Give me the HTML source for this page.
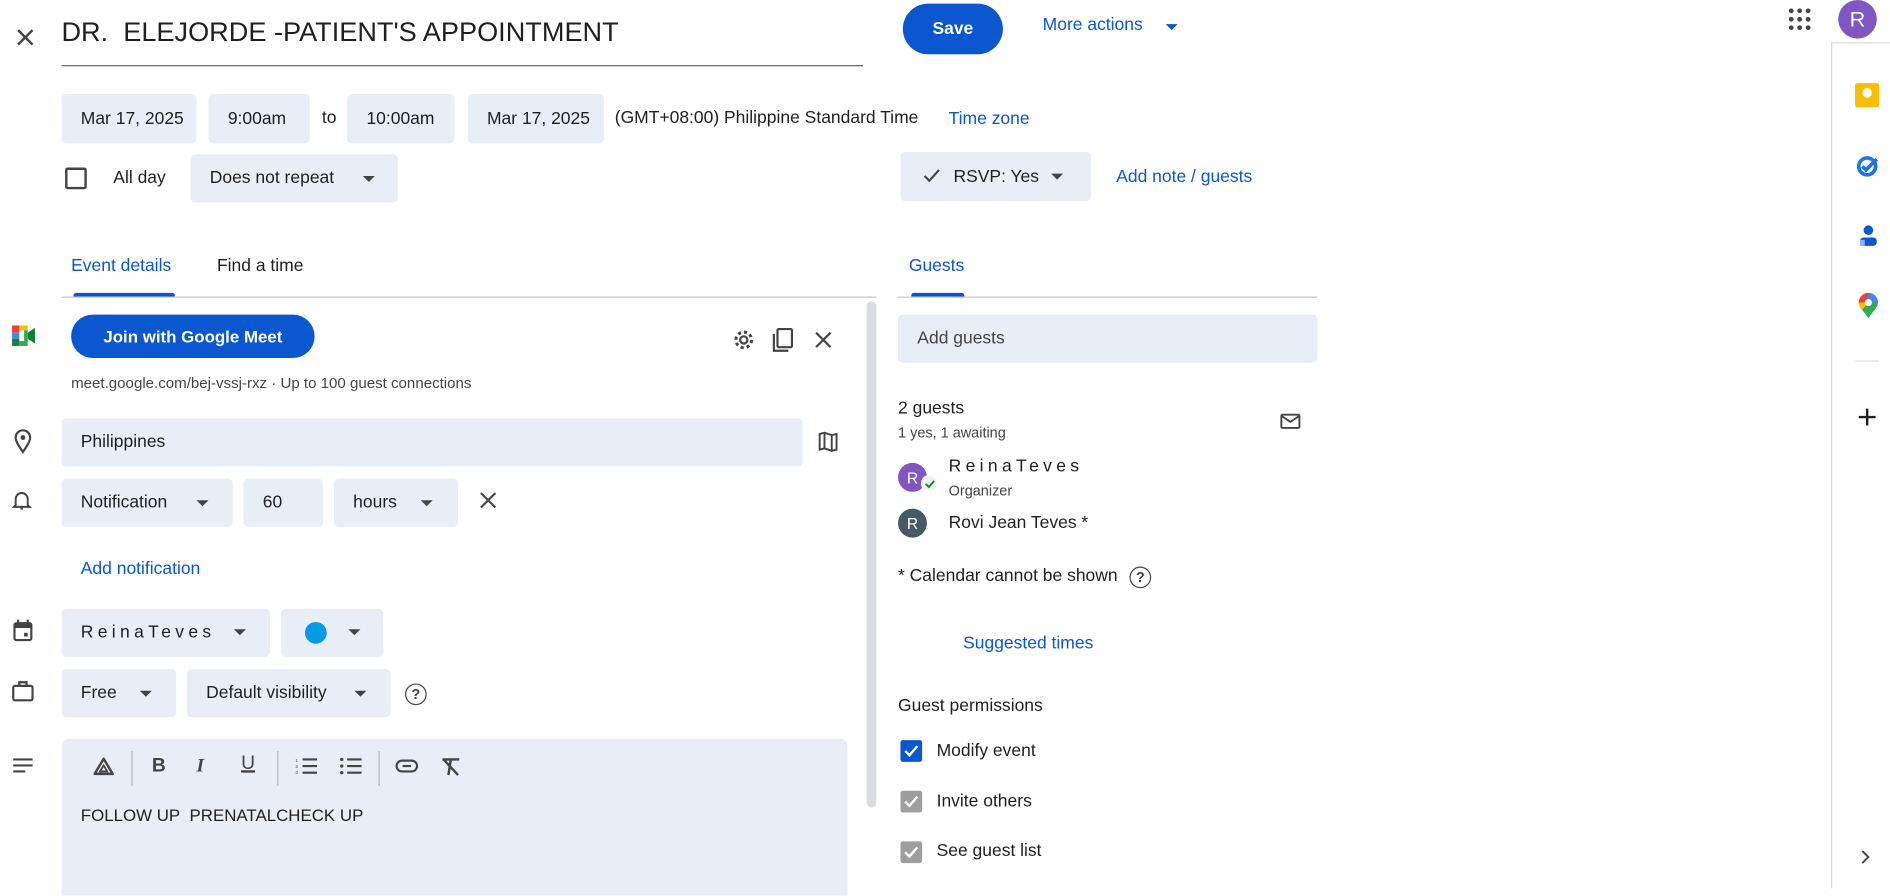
<!DOCTYPE html>
<html><head><meta charset="utf-8">
<style>
*{box-sizing:border-box;margin:0;padding:0}
html,body{width:1890px;height:888px;overflow:hidden;background:#fff}
#w{position:absolute;left:0;top:0;width:1568px;height:737px;transform:scale(1.2054);transform-origin:0 0;font-family:"Liberation Sans",Arial,sans-serif;color:#1f1f1f;font-size:14.5px}
.a{position:absolute}
.chip{position:absolute;background:#e9eef6;border-radius:4px;display:flex;align-items:center;padding-left:16px;font-size:14.5px;color:#1f1f1f}
.dd{position:absolute;width:0;height:0;border-left:5px solid transparent;border-right:5px solid transparent;border-top:5px solid #444}
.blue{color:#0b57d0;font-weight:bold}
.t{position:absolute;white-space:nowrap}
svg{position:absolute;overflow:visible}
</style></head><body><div id="w">

<svg style="left:14px;top:24px" width="14" height="14"><path d="M1 1L13 13M13 1L1 13" stroke="#444" stroke-width="2"/></svg>
<div class="t" style="left:51px;top:14px;font-size:22.5px;color:#1f1f1f">DR.&nbsp; ELEJORDE -PATIENT'S APPOINTMENT</div>
<div class="a" style="left:51px;top:54px;width:665px;height:1px;background:#5f6368"></div>
<div class="a" style="left:749px;top:3px;width:83px;height:42px;border-radius:21px;background:#0b57d0;color:#fff;font-weight:bold;display:flex;align-items:center;justify-content:center">Save</div>
<div class="t blue" style="left:865px;top:13px;font-weight:normal">More actions</div>
<div class="dd" style="left:967px;top:20px;border-top-color:#0b57d0"></div>

<svg style="left:1484px;top:7px" width="18" height="18"><g fill="#444"><circle cx="2" cy="2" r="2"/><circle cx="9" cy="2" r="2"/><circle cx="16" cy="2" r="2"/><circle cx="2" cy="9" r="2"/><circle cx="9" cy="9" r="2"/><circle cx="16" cy="9" r="2"/><circle cx="2" cy="16" r="2"/><circle cx="9" cy="16" r="2"/><circle cx="16" cy="16" r="2"/></g></svg>
<div class="a" style="left:1525px;top:0px;width:32px;height:32px;border-radius:50%;background:#7e57c2;color:#fff;font-size:18px;display:flex;align-items:center;justify-content:center">R</div>

<div class="a" style="left:1519px;top:35px;width:1px;height:702px;background:#dadce0"></div>
<div class="a" style="left:1519px;top:35px;width:49px;height:1px;background:#dadce0"></div>
<div class="a" style="left:1539px;top:69px;width:20px;height:20px;background:#fbbc04;border-radius:2px"></div>
<div class="a" style="left:1545px;top:73px;width:8px;height:8px;background:#fff;border-radius:50%"></div>
<svg style="left:1540px;top:128px" width="20" height="20"><circle cx="9" cy="10" r="7" fill="none" stroke="#1a73e8" stroke-width="3"/><path d="M5 10l3 3 9-9" stroke="#1a73e8" stroke-width="3" fill="none"/></svg>
<svg style="left:1540px;top:186px" width="20" height="20"><circle cx="10" cy="5" r="4" fill="#0b57d0"/><rect x="3" y="11" width="14" height="7" rx="3" fill="#0b57d0"/><rect x="3" y="13" width="4" height="5" fill="#8ab4f8"/></svg>
<svg style="left:1541px;top:243px" width="18" height="22"><path d="M9 21C5 15 1 12 1 8a8 8 0 0 1 16 0c0 4-4 7-8 13z" fill="#34a853"/><path d="M1 8a8 8 0 0 1 8-8v8z" fill="#ea4335"/><path d="M9 0a8 8 0 0 1 8 8H9z" fill="#4285f4"/><path d="M1 8h8l-5 6C2 12 1 10 1 8z" fill="#fbbc04"/><circle cx="9" cy="8" r="3" fill="#fff"/></svg>
<div class="a" style="left:1539px;top:299px;width:20px;height:1px;background:#e0e0e0"></div>
<svg style="left:1542px;top:339px" width="14" height="14"><path d="M7 0V14M0 7H14" stroke="#222" stroke-width="2"/></svg>
<svg style="left:1544px;top:705px" width="8" height="12"><path d="M1 1l5 5-5 5" stroke="#444" stroke-width="1.6" fill="none"/></svg>

<div class="chip" style="left:51px;top:78px;width:112px;height:41px">Mar 17, 2025</div>
<div class="chip" style="left:173px;top:78px;width:84px;height:41px">9:00am</div>
<div class="t" style="left:267px;top:90px">to</div>
<div class="chip" style="left:288px;top:78px;width:89px;height:41px">10:00am</div>
<div class="chip" style="left:388px;top:78px;width:113px;height:41px">Mar 17, 2025</div>
<div class="t" style="left:510px;top:90px">(GMT+08:00) Philippine Standard Time</div>
<div class="t blue" style="left:787px;top:91px;font-weight:normal">Time zone</div>

<div class="a" style="left:54px;top:139px;width:18px;height:18px;border:2px solid #444;border-radius:2px"></div>
<div class="t" style="left:94px;top:140px">All day</div>
<div class="chip" style="left:158px;top:128px;width:172px;height:40px">Does not repeat</div>
<div class="dd" style="left:301px;top:146px"></div>
<div class="chip" style="left:747px;top:126px;width:158px;height:41px;padding-left:20px"><svg style="left:19px;top:14px" width="14" height="12"><path d="M1 6l4 4 8-9" stroke="#444" stroke-width="1.8" fill="none"/></svg><span style="margin-left:24px">RSVP: Yes</span></div>
<div class="dd" style="left:872px;top:144px"></div>
<div class="t blue" style="left:926px;top:139px;font-weight:normal">Add note / guests</div>

<div class="t" style="left:59px;top:213px;color:#0b57d0">Event details</div>
<div class="a" style="left:61px;top:243px;width:84px;height:3px;background:#0b57d0;border-radius:2px 2px 0 0"></div>
<div class="t" style="left:180px;top:213px">Find a time</div>
<div class="a" style="left:51px;top:246px;width:676px;height:1px;background:#c4c7c5"></div>
<div class="t" style="left:754px;top:213px;color:#0b57d0">Guests</div>
<div class="a" style="left:756px;top:243px;width:44px;height:3px;background:#0b57d0;border-radius:2px 2px 0 0"></div>
<div class="a" style="left:745px;top:246px;width:348px;height:1px;background:#c4c7c5"></div>
<div class="a" style="left:719px;top:250px;width:8px;height:420px;background:#dadce0;border-radius:4px"></div>

<svg style="left:10px;top:270px" width="19" height="17"><rect x="0" y="0" width="6" height="6" fill="#ea4335"/><rect x="0" y="6" width="6" height="5" fill="#4285f4"/><rect x="0" y="11" width="6" height="6" fill="#188038"/><rect x="6" y="0" width="7" height="4" fill="#fbbc04"/><rect x="6" y="13" width="7" height="4" fill="#34a853"/><rect x="10" y="4" width="3" height="9" fill="#34a853"/><path d="M13 6l6-4v13l-6-4z" fill="#00832d"/></svg>
<div class="a" style="left:59px;top:261px;width:202px;height:36px;border-radius:18px;background:#0b57d0;color:#fff;font-weight:bold;font-size:14px;display:flex;align-items:center;justify-content:center">Join with Google Meet</div>
<svg style="left:608px;top:273px" width="18" height="18"><circle cx="9" cy="9" r="3" fill="none" stroke="#444" stroke-width="1.8"/><circle cx="9" cy="9" r="6.5" fill="none" stroke="#444" stroke-width="2.5" stroke-dasharray="2.6 2.5"/></svg>
<svg style="left:641px;top:272px" width="18" height="20"><rect x="4" y="1" width="12" height="15" rx="1" fill="none" stroke="#444" stroke-width="1.8"/><path d="M1 5v14h12" fill="none" stroke="#444" stroke-width="1.8"/></svg>
<svg style="left:677px;top:276px" width="12" height="12"><path d="M0 0L12 12M12 0L0 12" stroke="#444" stroke-width="1.8"/></svg>
<div class="t" style="left:59px;top:311px;font-size:12.5px;color:#444">meet.google.com/bej-vssj-rxz · Up to 100 guest connections</div>

<svg style="left:12px;top:356px" width="14" height="20"><path d="M7 19C3 13 1 10 1 7a6 6 0 0 1 12 0c0 3-2 6-6 12z" fill="none" stroke="#444" stroke-width="1.8"/><circle cx="7" cy="7" r="2" fill="#444"/></svg>
<div class="chip" style="left:51px;top:347px;width:615px;height:40px">Philippines</div>
<svg style="left:679px;top:358px" width="16" height="16"><path d="M1 2l4-1 6 2 4-1v13l-4 1-6-2-4 1z M5 1v13 M11 3v13" fill="none" stroke="#444" stroke-width="1.6"/></svg>

<svg style="left:11px;top:406px" width="14" height="18"><path d="M2 13V8a5 5 0 0 1 10 0v5l1.5 1.5h-13z M6 16h2" fill="none" stroke="#444" stroke-width="1.6"/></svg>
<div class="chip" style="left:51px;top:397px;width:142px;height:40px">Notification</div>
<div class="dd" style="left:163px;top:415px"></div>
<div class="chip" style="left:202px;top:397px;width:66px;height:40px">60</div>
<div class="chip" style="left:277px;top:397px;width:103px;height:40px">hours</div>
<div class="dd" style="left:349px;top:415px"></div>
<svg style="left:399px;top:409px" width="12" height="12"><path d="M0 0L12 12M12 0L0 12" stroke="#444" stroke-width="1.8"/></svg>
<div class="t blue" style="left:67px;top:464px;font-weight:normal">Add notification</div>

<svg style="left:11px;top:514px" width="16" height="18"><rect x="1" y="3" width="14" height="14" rx="1.5" fill="none" stroke="#444" stroke-width="1.8"/><rect x="1" y="3" width="14" height="4" fill="#444"/><path d="M4 0v4M12 0v4" stroke="#444" stroke-width="1.8"/><rect x="9" y="11" width="3" height="3" fill="#444"/></svg>
<div class="chip" style="left:51px;top:505px;width:173px;height:40px;letter-spacing:3.6px">ReinaTeves</div>
<div class="dd" style="left:194px;top:522px"></div>
<div class="chip" style="left:233px;top:505px;width:85px;height:40px"></div>
<div class="a" style="left:253px;top:516px;width:18px;height:18px;border-radius:50%;background:#039be5"></div>
<div class="dd" style="left:289px;top:522px"></div>

<svg style="left:10px;top:565px" width="18" height="17"><rect x="1" y="4" width="16" height="12" rx="1.5" fill="none" stroke="#444" stroke-width="1.8"/><path d="M6 4V1h6v3" fill="none" stroke="#444" stroke-width="1.8"/></svg>
<div class="chip" style="left:51px;top:555px;width:95px;height:40px">Free</div>
<div class="dd" style="left:116px;top:573px"></div>
<div class="chip" style="left:155px;top:555px;width:169px;height:40px">Default visibility</div>
<div class="dd" style="left:294px;top:573px"></div>
<div class="a" style="left:336px;top:567px;width:18px;height:18px;border:1.8px solid #444;border-radius:50%;font-size:12px;font-weight:bold;display:flex;align-items:center;justify-content:center;color:#444">?</div>

<svg style="left:11px;top:629px" width="16" height="12"><path d="M0 1h16M0 6h16M0 11h10" stroke="#444" stroke-width="1.8"/></svg>
<div class="a" style="left:51px;top:613px;width:652px;height:130px;background:#e9eef6;border-radius:6px 6px 0 0"></div>
<svg style="left:77px;top:628px" width="18" height="16"><path d="M9 1.5L16.5 14h-15z" fill="none" stroke="#444" stroke-width="2" stroke-linejoin="round"/><path d="M9 7L12 12H6z" fill="none" stroke="#444" stroke-width="1.5"/></svg>
<div class="a" style="left:109px;top:623px;width:1px;height:29px;background:#b0b3b8"></div>
<div class="t" style="left:126px;top:627px;font-weight:bold;font-size:16px;color:#444">B</div>
<div class="t" style="left:163px;top:627px;font-weight:bold;font-style:italic;font-size:16px;color:#444;font-family:'Liberation Serif',serif">I</div>
<div class="t" style="left:200px;top:625px;font-size:16px;color:#444;text-decoration:underline;text-decoration-thickness:2px">U</div>
<div class="a" style="left:230px;top:623px;width:1px;height:29px;background:#b0b3b8"></div>
<svg style="left:245px;top:628px" width="18" height="15"><path d="M6 2h12M6 7.5h12M6 13h12" stroke="#444" stroke-width="1.8"/><text x="0" y="4" font-size="4" fill="#444" font-family="Liberation Sans">1</text><text x="0" y="9" font-size="4" fill="#444" font-family="Liberation Sans">2</text><text x="0" y="14" font-size="4" fill="#444" font-family="Liberation Sans">3</text></svg>
<svg style="left:282px;top:628px" width="18" height="15"><path d="M6 2h12M6 7.5h12M6 13h12" stroke="#444" stroke-width="1.8"/><circle cx="1.5" cy="2" r="1.4" fill="#444"/><circle cx="1.5" cy="7.5" r="1.4" fill="#444"/><circle cx="1.5" cy="13" r="1.4" fill="#444"/></svg>
<div class="a" style="left:314px;top:623px;width:1px;height:29px;background:#b0b3b8"></div>
<svg style="left:328px;top:630px" width="19" height="11"><rect x="1" y="1" width="17" height="9" rx="4.5" fill="none" stroke="#444" stroke-width="1.8"/><path d="M6 5.5h7" stroke="#444" stroke-width="1.8"/></svg>
<svg style="left:366px;top:628px" width="16" height="16"><path d="M1 2h14M8 2l-2 13M2 2l12 13" stroke="#444" stroke-width="2"/></svg>
<div class="t" style="left:67px;top:668px;font-size:14px">FOLLOW UP&nbsp; PRENATALCHECK UP</div>

<div class="chip" style="left:745px;top:261px;width:348px;height:40px;color:#444">Add guests</div>
<div class="t" style="left:745px;top:331px">2 guests</div>
<div class="t" style="left:745px;top:352px;font-size:12px;color:#444">1 yes, 1 awaiting</div>
<svg style="left:1062px;top:343px" width="17" height="13"><rect x="1" y="1" width="15" height="11" rx="1" fill="none" stroke="#444" stroke-width="1.6"/><path d="M1 2l7.5 5L16 2" fill="none" stroke="#444" stroke-width="1.6"/></svg>
<div class="a" style="left:745px;top:384px;width:24px;height:24px;border-radius:50%;background:#7e57c2;color:#fff;font-size:13px;display:flex;align-items:center;justify-content:center">R</div>
<div class="a" style="left:764px;top:394px;width:14px;height:14px;border-radius:50%;background:#e6f4ea;border:1.5px solid #fff"></div>
<svg style="left:767px;top:398px" width="9" height="7"><path d="M1 3.5l2.5 2.5L8 1" stroke="#188038" stroke-width="1.6" fill="none"/></svg>
<div class="t" style="left:787px;top:379px;letter-spacing:3.6px">ReinaTeves</div>
<div class="t" style="left:787px;top:400px;font-size:12px;color:#444">Organizer</div>
<div class="a" style="left:745px;top:422px;width:24px;height:24px;border-radius:50%;background:#455a64;color:#fff;font-size:13px;display:flex;align-items:center;justify-content:center">R</div>
<div class="t" style="left:787px;top:426px">Rovi Jean Teves *</div>
<div class="t" style="left:745px;top:470px">* Calendar cannot be shown</div>
<div class="a" style="left:937px;top:470px;width:18px;height:18px;border:1.8px solid #444;border-radius:50%;font-size:12px;font-weight:bold;display:flex;align-items:center;justify-content:center;color:#444">?</div>
<div class="t blue" style="left:799px;top:526px;font-weight:normal">Suggested times</div>
<div class="t" style="left:745px;top:578px">Guest permissions</div>
<div class="a" style="left:747px;top:614px;width:18px;height:18px;background:#0b57d0;border-radius:2px"></div>
<svg style="left:750px;top:618px" width="12" height="10"><path d="M1 5l3.5 3.5L11 1" stroke="#fff" stroke-width="2" fill="none"/></svg>
<div class="t" style="left:777px;top:615px">Modify event</div>
<div class="a" style="left:747px;top:656px;width:18px;height:18px;background:#9e9e9e;border-radius:2px"></div>
<svg style="left:750px;top:660px" width="12" height="10"><path d="M1 5l3.5 3.5L11 1" stroke="#fff" stroke-width="2" fill="none"/></svg>
<div class="t" style="left:777px;top:657px">Invite others</div>
<div class="a" style="left:747px;top:698px;width:18px;height:18px;background:#9e9e9e;border-radius:2px"></div>
<svg style="left:750px;top:702px" width="12" height="10"><path d="M1 5l3.5 3.5L11 1" stroke="#fff" stroke-width="2" fill="none"/></svg>
<div class="t" style="left:777px;top:698px">See guest list</div>

</div></body></html>
